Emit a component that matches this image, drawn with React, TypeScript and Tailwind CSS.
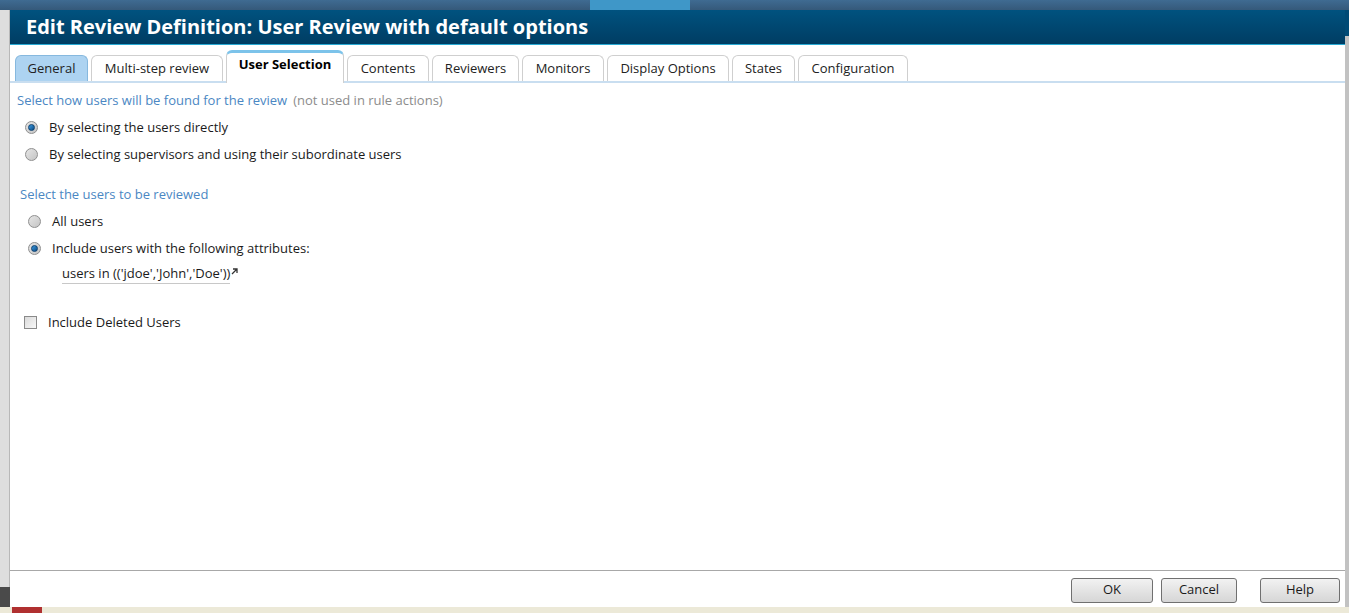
import React from "react";

const tabs = [
  { label: "General", w: "w-[73px]", kind: "hover" },
  { label: "Multi-step review", w: "w-[132px]", kind: "normal" },
  { label: "User Selection", w: "w-[118px]", kind: "active" },
  { label: "Contents", w: "w-[82px]", kind: "normal" },
  { label: "Reviewers", w: "w-[87px]", kind: "normal" },
  { label: "Monitors", w: "w-[82px]", kind: "normal" },
  { label: "Display Options", w: "w-[122px]", kind: "normal" },
  { label: "States", w: "w-[63px]", kind: "normal" },
  { label: "Configuration", w: "w-[110px]", kind: "normal" },
];

function Radio({ checked }: { checked?: boolean }) {
  return (
    <span className="w-[13px] h-[13px] rounded-full border border-[#8f8f8f] bg-gradient-to-br from-[#e6e6e6] to-[#c4c4c4] flex items-center justify-center shrink-0">
      {checked && (
        <span className="w-[7px] h-[7px] rounded-full bg-gradient-to-br from-[#3c9ae0] to-[#0a4c86] border border-[#0b3f6e]" />
      )}
    </span>
  );
}

function Button({ label, w }: { label: string; w: string }) {
  return (
    <button className={`${w} h-[25px] rounded-[3px] border border-[#707070] bg-gradient-to-b from-[#f2f2f2] to-[#d6d6d6] text-[13px] text-[#1a1a1a]`}>
      {label}
    </button>
  );
}

export default function App() {
  return (
    <div
      className="w-[1349px] h-[613px] flex flex-col overflow-hidden bg-[#3b6488]"
      style={{ fontFamily: '"Open Sans", "Noto Sans", sans-serif' }}
    >
      {/* page behind the dialog */}
      <div className="h-[10px] flex shrink-0 bg-gradient-to-b from-[#3f6b92] to-[#35597a]">
        <div className="w-[590px]" />
        <div className="w-[100px] bg-[#3f97c8]" />
      </div>

      <div className="flex flex-1 min-h-0">
        <div className="w-[10px] flex flex-col shrink-0">
          <div className="flex-1 bg-[#dedede] border-r border-[#b8b8b8]" />
          <div className="h-[20px] bg-[#4a4a4a]" />
        </div>

        {/* dialog */}
        <div className="flex-1 flex flex-col bg-white">
          <div className="h-[35px] shrink-0 bg-gradient-to-b from-[#00527f] to-[#003d63] border-b border-[#28a9d3] flex items-center pl-[16px]">
            <h1 className="text-white text-[20px] font-bold leading-none">
              Edit Review Definition: User Review with default options
            </h1>
          </div>

          <div className="flex items-end gap-[3px] pl-[5px] pt-[5px] border-b-2 border-[#c9def0] shrink-0">
            {tabs.map((t) =>
              t.kind === "active" ? (
                <div
                  key={t.label}
                  className={`${t.w} h-[33px] -mb-[2px] rounded-t-[6px] border border-b-0 border-[#cfcfcf] border-t-[3px] border-t-[#7cc3ea] bg-white flex items-center justify-center text-[13px] font-bold text-black pb-[6px]`}
                >
                  {t.label}
                </div>
              ) : (
                <div
                  key={t.label}
                  className={`${t.w} h-[26px] rounded-t-[6px] border border-b-0 flex items-center justify-center text-[13px] text-[#222] pt-[1px] ${
                    t.kind === "hover"
                      ? "bg-[#add3f1] border-[#86b8de]"
                      : "bg-white border-[#cfcfcf]"
                  }`}
                >
                  {t.label}
                </div>
              )
            )}
          </div>

          <div className="flex-1 flex flex-col text-[13px] text-[#1a1a1a]">
            <p className="ml-[7px] mt-[8px] text-[#4b87c3]">
              Select how users will be found for the review
              <span className="ml-[6px] text-[#8c8c8c]">(not used in rule actions)</span>
            </p>
            <label className="flex items-center gap-[11px] ml-[15px] mt-[7px]">
              <Radio checked />
              By selecting the users directly
            </label>
            <label className="flex items-center gap-[11px] ml-[15px] mt-[8px]">
              <Radio />
              By selecting supervisors and using their subordinate users
            </label>

            <p className="ml-[10px] mt-[20px] text-[#4b87c3]">Select the users to be reviewed</p>
            <label className="flex items-center gap-[11px] ml-[18px] mt-[8px]">
              <Radio />
              All users
            </label>
            <label className="flex items-center gap-[11px] ml-[18px] mt-[7px]">
              <Radio checked />
              Include users with the following attributes:
            </label>
            <div className="ml-[52px] mt-[6px] flex items-start">
              <span className="border-b border-[#c8c8c8] leading-[19px]">
                users in (('jdoe','John','Doe'))
              </span>
              <svg width="7" height="7" viewBox="0 0 7 7" className="mt-[4px] ml-[1px]">
                <path d="M1 6 L6 1 M2 1 H6 V5" stroke="#333" strokeWidth="1.3" fill="none" />
              </svg>
            </div>

            <label className="flex items-center gap-[11px] ml-[14px] mt-[29px]">
              <span className="w-[13px] h-[13px] border border-[#8a8a8a] bg-gradient-to-br from-[#dadada] to-[#f8f8f8] shrink-0" />
              Include Deleted Users
            </label>
          </div>

          <div className="h-[37px] shrink-0 border-t border-[#a8a8a8] flex items-center justify-end gap-[8px] pr-[5px] pt-[2px]">
            <Button label="OK" w="w-[82px]" />
            <Button label="Cancel" w="w-[76px]" />
            <div className="w-[7px]" />
            <Button label="Help" w="w-[80px]" />
          </div>
        </div>

        <div className="w-[4px] flex flex-col shrink-0">
          <div className="h-[26px] bg-[#004a75]" />
          <div className="flex-1 bg-[#c2c2c2]" />
        </div>
      </div>

      <div className="h-[6px] shrink-0 bg-[#ece9d8] flex">
        <div className="w-[12px]" />
        <div className="w-[30px] bg-[#b03030]" />
      </div>
    </div>
  );
}
